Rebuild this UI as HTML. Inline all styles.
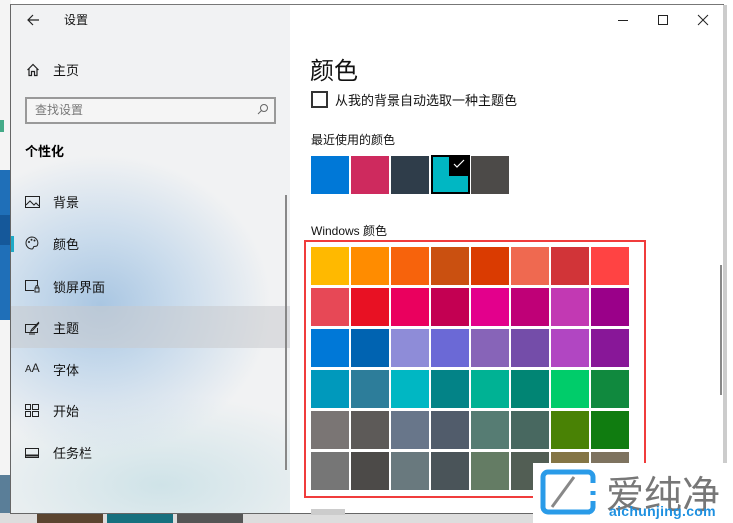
<!DOCTYPE html>
<html><head><meta charset="utf-8"><style>
*{margin:0;padding:0;box-sizing:border-box}
body{width:733px;height:523px;overflow:hidden;background:#fff;position:relative;font-family:"Liberation Sans","Noto Sans CJK SC",sans-serif;color:#000}
.a{position:absolute}
.left{left:11px;top:5px;width:279px;height:508px;background:radial-gradient(ellipse 170px 150px at 90px 300px,#a9c6e2 0%,#c9dbec 45%,rgba(240,242,244,0) 100%),radial-gradient(ellipse 200px 90px at 150px 480px,#cfe3e8 0%,rgba(240,242,244,0) 100%),#f1f2f3}
.right{left:290px;top:5px;width:433px;height:508px;background:#fff}
.t{font-size:12px;color:#111}
.sw{position:absolute;width:38px;height:38px}
</style></head><body>
<div class="a" style="left:0;top:0;width:11px;height:523px;background:#f4f4f4"></div>
<div class="a" style="left:0;top:120px;width:4px;height:12px;background:#4a8;"></div>
<div class="a" style="left:0;top:170px;width:11px;height:150px;background:#1f6fb8"></div>
<div class="a" style="left:0;top:215px;width:11px;height:30px;background:#15589a"></div>
<div class="a" style="left:0;top:475px;width:11px;height:48px;background:#5a7e98"></div>
<div class="a" style="left:0;top:513px;width:733px;height:10px;background:#ddd"></div>
<div class="a" style="left:37px;top:513px;width:66px;height:10px;background:#5b4530"></div>
<div class="a" style="left:107px;top:513px;width:66px;height:10px;background:#17707e"></div>
<div class="a" style="left:177px;top:513px;width:66px;height:10px;background:#555"></div>
<div class="a" style="left:10px;top:4px;width:714px;height:510px;border:1px solid #666;border-top-color:#777"></div>
<div class="a" style="left:723px;top:5px;width:4px;height:508px;background:#ccc"></div>

<div class="a left"></div>
<div class="a right"></div>

<svg class="a" style="left:26px;top:13px" width="14" height="14" viewBox="0 0 14 14"><path d="M13 7H2M7 2L2 7l5 5" stroke="#222" stroke-width="1.2" fill="none"/></svg>
<div class="a t" style="left:64px;top:11px">设置</div>
<svg class="a" style="left:26px;top:63px" width="14" height="14" viewBox="0 0 14 14"><path d="M1.5 7L7 1.5 12.5 7M3 5.5V12.5H5.5V8.5H8.5V12.5H11V5.5" stroke="#222" stroke-width="1.2" fill="none"/></svg>
<div class="a t" style="left:53px;top:60px;font-size:13px">主页</div>
<div class="a" style="left:25px;top:97px;width:251px;height:27px;border:2px solid #999;background:#f5f5f5"></div>
<div class="a" style="left:35px;top:101px;font-size:12px;color:#777">查找设置</div>
<svg class="a" style="left:257px;top:103px" width="12" height="12" viewBox="0 0 12 12"><circle cx="7" cy="5" r="3.5" stroke="#666" fill="none"/><path d="M4.5 7.5L1 11" stroke="#666"/></svg>
<div class="a" style="left:25px;top:141px;font-size:13px;font-weight:bold">个性化</div>

<div class="a" style="left:11px;top:306px;width:279px;height:42px;background:rgba(200,202,205,0.55)"></div>
<div class="a" style="left:11px;top:236px;width:3px;height:16px;background:#1fa9c6"></div>
<div class="a" style="left:285px;top:195px;width:2px;height:275px;background:#888"></div>

<svg class="a" style="left:25px;top:196px" width="15" height="12" viewBox="0 0 15 12"><rect x=".5" y=".5" width="14" height="11" stroke="#222" fill="none"/><path d="M1 9l4-4 4 4 2-2 3 3" stroke="#222" fill="none"/></svg>
<div class="a t" style="left:53px;top:192px;font-size:13px">背景</div>
<svg class="a" style="left:25px;top:236px" width="14" height="14" viewBox="0 0 14 14"><path d="M7 1a6 6 0 1 0 0 12c1.5 0 1-2 2-2.5s3 .5 3.5-1.5A6 6 0 0 0 7 1z" stroke="#222" fill="none"/><circle cx="4" cy="6" r="1" fill="#222"/><circle cx="6.5" cy="3.8" r="1" fill="#222"/><circle cx="9.5" cy="4.5" r="1" fill="#222"/></svg>
<div class="a t" style="left:53px;top:234px;font-size:13px">颜色</div>
<svg class="a" style="left:25px;top:280px" width="15" height="13" viewBox="0 0 15 13"><path d="M9 10.5H.5V.5h12V6" stroke="#222" fill="none"/><rect x="10" y="8" width="4" height="4" stroke="#222" fill="none"/><path d="M10.8 8V6.8a1.2 1.2 0 0 1 2.4 0V8" stroke="#222" fill="none"/></svg>
<div class="a t" style="left:53px;top:277px;font-size:13px">锁屏界面</div>
<svg class="a" style="left:25px;top:321px" width="15" height="14" viewBox="0 0 15 14"><path d="M11 3.5H.5v8h12V7" stroke="#222" fill="none"/><path d="M14 1L7 8l-1.5 2.5L8 9l6-7" stroke="#222" fill="none"/><path d="M4 13h6" stroke="#222"/></svg>
<div class="a t" style="left:53px;top:318px;font-size:13px">主题</div>
<div class="a" style="left:25px;top:361px;font-size:10px;color:#222">A<span style="font-size:12px">A</span></div>
<div class="a t" style="left:53px;top:360px;font-size:13px">字体</div>
<svg class="a" style="left:25px;top:404px" width="14" height="13" viewBox="0 0 14 13"><rect x=".5" y=".5" width="5" height="5" stroke="#222" fill="none"/><rect x="7.5" y=".5" width="6" height="5" stroke="#222" fill="none"/><rect x=".5" y="7.5" width="5" height="5" stroke="#222" fill="none"/><rect x="7.5" y="7.5" width="6" height="5" stroke="#222" fill="none"/></svg>
<div class="a t" style="left:53px;top:401px;font-size:13px">开始</div>
<svg class="a" style="left:25px;top:448px" width="14" height="10" viewBox="0 0 14 10"><rect x=".5" y=".5" width="13" height="9" stroke="#222" fill="none"/><path d="M1 7.5h12" stroke="#222" stroke-width="2"/></svg>
<div class="a t" style="left:53px;top:443px;font-size:13px">任务栏</div>

<div class="a" style="left:618px;top:20px;width:10px;height:1px;background:#222"></div>
<div class="a" style="left:658px;top:15px;width:10px;height:10px;border:1px solid #222"></div>
<svg class="a" style="left:697px;top:14px" width="12" height="12" viewBox="0 0 12 12"><path d="M1 1l10 10M11 1L1 11" stroke="#222"/></svg>

<div class="a" style="left:310px;top:51px;font-size:24px;color:#111">颜色</div>
<div class="a" style="left:311px;top:91px;width:17px;height:17px;border:2px solid #333"></div>
<div class="a t" style="left:335px;top:90px;font-size:13px">从我的背景自动选取一种主题色</div>
<div class="a t" style="left:311px;top:131px">最近使用的颜色</div>
<div class="sw" style="left:311px;top:156px;background:#0078D7"></div>
<div class="sw" style="left:351px;top:156px;background:#CE2A5E"></div>
<div class="sw" style="left:391px;top:156px;background:#2F3D4A"></div>
<div class="sw" style="left:431px;top:155px;width:39px;height:39px;background:#00B7C3;border:2px solid #000"></div>
<div class="a" style="left:449px;top:155px;width:21px;height:21px;background:#000"></div>
<svg class="a" style="left:452px;top:158px" width="14" height="12" viewBox="0 0 14 12"><path d="M2 6l3 3 7-7" stroke="#fff" fill="none" stroke-width="1.2"/></svg>
<div class="sw" style="left:471px;top:156px;background:#4C4A48"></div>
<div class="a t" style="left:311px;top:222px">Windows 颜色</div>

<div class="a" style="left:304px;top:240px;width:342px;height:258px;border:2px solid #f03c3c"></div>
<div id="g"></div>
<script>
var c=[["#FFB900","#FF8C00","#F7630C","#CA5010","#DA3B01","#EF6950","#D13438","#FF4343"],
["#E74856","#E81123","#EA005E","#C30052","#E3008C","#BF0077","#C239B3","#9A0089"],
["#0078D7","#0063B1","#8E8CD8","#6B69D6","#8764B8","#744DA9","#B146C2","#881798"],
["#0099BC","#2D7D9A","#00B7C3","#038387","#00B294","#018574","#00CC6A","#10893E"],
["#7A7574","#5D5A58","#68768A","#515C6B","#567C73","#486860","#498205","#107C10"],
["#767676","#4C4A48","#69797E","#4A5459","#647C64","#525E54","#847545","#7E735F"]];
var h="";for(var r=0;r<6;r++)for(var i=0;i<8;i++)h+='<div class="sw" style="left:'+(311+i*40)+'px;top:'+(247+r*41)+'px;background:'+c[r][i]+'"></div>';
document.getElementById("g").innerHTML=h;
</script>
<div class="a" style="left:720px;top:265px;width:2px;height:130px;background:#888"></div>
<div class="a" style="left:311px;top:509px;width:34px;height:6px;background:#ccc"></div>

<div class="a" style="left:533px;top:463px;width:200px;height:60px;background:#fff"></div>
<svg class="a" style="left:540px;top:469px" width="56" height="46" viewBox="0 0 56 46"><path d="M40 3H8a5 5 0 0 0-5 5v30a5 5 0 0 0 5 5h42" stroke="#2a9be8" stroke-width="5" fill="none"/><path d="M40 3h8a5 5 0 0 1 5 5v6M53 22v4M53 32v6a5 5 0 0 1-5 5" stroke="#2a9be8" stroke-width="5" fill="none"/><path d="M12 38L34 8" stroke="#888" stroke-width="3"/></svg>
<div class="a" style="left:606px;top:464px;font-size:38px;color:#777;letter-spacing:0px">爱纯净</div>
<div class="a" style="left:609px;top:503px;font-size:14px;font-weight:bold;color:#1e90e0;letter-spacing:.3px">aichunjing.com</div>
</body></html>
